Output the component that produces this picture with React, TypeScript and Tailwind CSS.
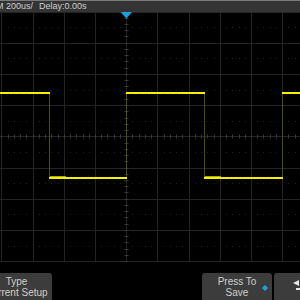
import React from "react";

const DIV = 31.2;
const CX = 126.7;
const H = 250;
const snap = (v: number) => Math.floor(v) + 0.5;

function Grid() {
  const vx: number[] = [];
  for (let k = -5; k <= 6; k++) {
    const x = CX + k * DIV;
    if (x >= 0 && x <= 300) vx.push(snap(x));
  }
  const hy: number[] = [];
  for (let k = 0; k <= 8; k++) hy.push(snap(k * DIV));
  const cy = snap(4 * DIV);
  const ticksX: number[] = [];
  for (let x = CX - 5 * DIV; x <= 300; x += DIV / 5) if (x >= 0) ticksX.push(snap(x));
  const ticksY: number[] = [];
  for (let y = 0; y <= H; y += DIV / 5) ticksY.push(snap(y));
  const dotsY: number[] = [];
  for (let k = 0; k < 8; k++) dotsY.push(snap(k * DIV + DIV / 2));

  const hi = 81;
  const lo = 166;
  const edges = [49.5, 126.5, 204.5, 282.5];
  const Y = "#f2f200";

  return (
    <svg width={300} height={H} className="block">
      <rect width={300} height={H} fill="#000" />
      {vx.map((x, i) => (
        <line key={"v" + i} x1={x} x2={x} y1={0} y2={H} stroke="#242424" strokeWidth={1} />
      ))}
      {hy.map((y, i) => (
        <line key={"h" + i} x1={0} x2={300} y1={y} y2={y} stroke="#242424" strokeWidth={1} />
      ))}
      {dotsY.map((y, i) =>
        ticksX.map((x, j) => (
          <rect key={"d" + i + "-" + j} x={x - 0.5} y={y - 0.5} width={1} height={1} fill="#222" />
        ))
      )}
      {ticksX.map((x, i) => (
        <line key={"tx" + i} x1={x} x2={x} y1={cy - 2} y2={cy + 2} stroke="#383838" strokeWidth={1} />
      ))}
      {ticksY.map((y, i) => (
        <line key={"ty" + i} x1={snap(CX) - 2} x2={snap(CX) + 2} y1={y} y2={y} stroke="#383838" strokeWidth={1} />
      ))}
      {edges.map((x, i) => (
        <line key={"e" + i} x1={x} x2={x} y1={hi} y2={lo} stroke="#4f4f00" strokeWidth={1} />
      ))}
      <line x1={0} x2={50} y1={hi} y2={hi} stroke={Y} strokeWidth={2} />
      <line x1={126} x2={205} y1={hi} y2={hi} stroke={Y} strokeWidth={2} />
      <line x1={282} x2={300} y1={hi} y2={hi} stroke={Y} strokeWidth={2} />
      <line x1={49} x2={127} y1={lo} y2={lo} stroke={Y} strokeWidth={2} />
      <line x1={204} x2={283} y1={lo} y2={lo} stroke={Y} strokeWidth={2} />
      <line x1={50} x2={66} y1={lo - 1.5} y2={lo - 1.5} stroke="#a8a800" strokeWidth={1} />
      <line x1={205} x2={221} y1={lo - 1.5} y2={lo - 1.5} stroke="#a8a800" strokeWidth={1} />
      <polygon points="120.7,0 132,0 126.4,6.5" fill="#1aa3e0" />
    </svg>
  );
}

export default function App() {
  const font = { fontFamily: '"Liberation Sans", Arial, sans-serif' };
  return (
    <div className="w-[300px] h-[300px] bg-black overflow-hidden flex flex-col" style={font}>
      <div className="h-[12px] bg-[#343434] border-t border-[#7a7a7a] flex items-center overflow-hidden whitespace-nowrap text-[9px] leading-none text-[#cfcfcf]">
        <span className="ml-[-4px]">M 200us/</span>
        <span className="ml-[6px]">Delay:0.00s</span>
      </div>
      <Grid />
      <div className="flex-1" />
      <div className="h-[27px] flex items-stretch gap-[2px] text-[10px] leading-[11px] text-[#cfcfcf]">
        <div className="ml-[-19px] w-[71px] shrink-0 bg-[#3c3c3c] rounded-t-[3px] flex flex-col items-center justify-center pt-[1px] whitespace-nowrap">
          <span>Type</span>
          <span>Current Setup</span>
        </div>
        <div className="w-[146px] shrink-0" />
        <div className="relative w-[70px] shrink-0 bg-[#3c3c3c] rounded-t-[3px] flex flex-col items-center justify-center pt-[1px] whitespace-nowrap">
          <span>Press To</span>
          <span>Save</span>
          <svg width={6} height={6} className="absolute left-[60px] top-[12px]">
            <polygon points="3,0 6,3 3,6 0,3" fill="#1aa3e0" />
          </svg>
        </div>
        <div className="relative w-[40px] shrink-0 bg-[#3c3c3c] rounded-t-[3px]">
          <svg width={12} height={12} className="absolute left-[18px] top-[7px]">
            <polygon points="1,3 7,0 7,6" fill="#e8e8e8" />
            <rect x={4} y={8} width={8} height={2} fill="#e8e8e8" />
          </svg>
        </div>
      </div>
    </div>
  );
}
